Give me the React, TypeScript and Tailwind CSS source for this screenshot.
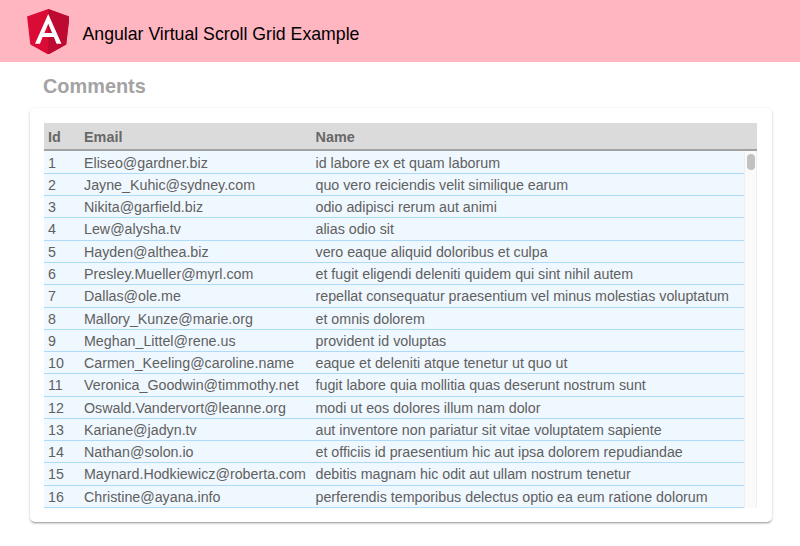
const rows: [string, string][] = [
  ["Eliseo@gardner.biz", "id labore ex et quam laborum"],
  ["Jayne_Kuhic@sydney.com", "quo vero reiciendis velit similique earum"],
  ["Nikita@garfield.biz", "odio adipisci rerum aut animi"],
  ["Lew@alysha.tv", "alias odio sit"],
  ["Hayden@althea.biz", "vero eaque aliquid doloribus et culpa"],
  ["Presley.Mueller@myrl.com", "et fugit eligendi deleniti quidem qui sint nihil autem"],
  ["Dallas@ole.me", "repellat consequatur praesentium vel minus molestias voluptatum"],
  ["Mallory_Kunze@marie.org", "et omnis dolorem"],
  ["Meghan_Littel@rene.us", "provident id voluptas"],
  ["Carmen_Keeling@caroline.name", "eaque et deleniti atque tenetur ut quo ut"],
  ["Veronica_Goodwin@timmothy.net", "fugit labore quia mollitia quas deserunt nostrum sunt"],
  ["Oswald.Vandervort@leanne.org", "modi ut eos dolores illum nam dolor"],
  ["Kariane@jadyn.tv", "aut inventore non pariatur sit vitae voluptatem sapiente"],
  ["Nathan@solon.io", "et officiis id praesentium hic aut ipsa dolorem repudiandae"],
  ["Maynard.Hodkiewicz@roberta.com", "debitis magnam hic odit aut ullam nostrum tenetur"],
  ["Christine@ayana.info", "perferendis temporibus delectus optio ea eum ratione dolorum"],
];

function AngularLogo() {
  return (
    <svg viewBox="31.9 30 186.2 200" className="h-[45.5px] w-[42.5px] shrink-0" aria-hidden="true">
      <path fill="#da0b34" d="M125 30 31.9 63.2l14.2 123.1L125 230l78.9-43.7 14.2-123.1z" />
      <path fill="#bd0a30" d="M125 30v200l78.9-43.7 14.2-123.1z" />
      <path
        fill="#fff"
        d="M125 52.1 66.8 182.6h21.7l11.7-29.2h49.4l11.7 29.2H183L125 52.1zm17 83.3h-34l17-40.9z"
      />
    </svg>
  );
}

function Header() {
  return (
    <header className="flex h-[62px] items-start bg-[#ffb6c1] pl-[26.5px] pt-[8.5px]">
      <AngularLogo />
      <h1 className="ml-[13.5px] mt-[13px] whitespace-nowrap text-[17.7px] leading-6 text-black">
        Angular Virtual Scroll Grid Example
      </h1>
    </header>
  );
}

export default function App() {
  return (
    <div className="h-[546px] overflow-hidden bg-white font-['Liberation_Sans',Arial,sans-serif]">
      <Header />
      <h2 className="ml-[43px] mt-3 text-[19.9px] leading-6 font-bold text-[#a3a3a3]">Comments</h2>
      <main className="ml-[30px] mt-[10px] h-[414px] w-[742px] rounded-[5px] bg-white px-3.5 pt-[15px] shadow-[0_1px_3px_rgba(0,0,0,0.2),0_2px_2px_-1px_rgba(0,0,0,0.28)]">
        <div className="grid h-7 w-[713px] grid-cols-[40px_231.5px_1fr] items-center border-b-2 border-[#a2a2a2] bg-[#dbdbdb] pt-[3px] text-[14.4px] font-bold text-[#686868]">
          <span className="pl-1">Id</span>
          <span>Email</span>
          <span>Name</span>
        </div>
        <div className="flex h-[357px] w-[713px]">
          <div className="w-[700px] bg-[#f0f8ff] pt-[0.7px]">
            {rows.map(([email, name], i) => (
              <div
                key={email}
                className="grid h-[22.27px] grid-cols-[40px_231.5px_1fr] items-center border-b border-[#acdaf8] pt-px text-[14.26px] whitespace-nowrap text-[#606060]"
              >
                <span className="pl-1">{i + 1}</span>
                <span>{email}</span>
                <span>{name}</span>
              </div>
            ))}
          </div>
          <div className="w-[13px] border-x border-[#eeeeee] bg-[#fafafa] pl-[2px] pt-[3px]">
            <div className="h-4 w-2 rounded-full bg-[#c1c1c1]" />
          </div>
        </div>
      </main>
    </div>
  );
}
